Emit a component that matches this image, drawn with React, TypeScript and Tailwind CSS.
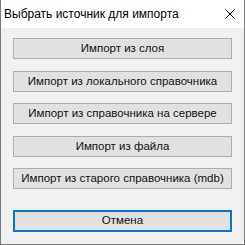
const items = [
  { label: 'Импорт из слоя', mt: 'mt-0' },
  { label: 'Импорт из локального справочника', mt: 'mt-[12px]' },
  { label: 'Импорт из справочника на сервере', mt: 'mt-[11px]' },
  { label: 'Импорт из файла', mt: 'mt-[12px]' },
  { label: 'Импорт из старого справочника (mdb)', mt: 'mt-[11px]' },
];

export default function App() {
  return (
    <div className="w-[245px] h-[245px] flex flex-col bg-[#f0f0f0] border-x border-b border-[#7a7a7a] font-['Liberation_Sans',sans-serif] text-black">
      <div className="h-[28px] bg-white flex items-center justify-between pl-[3px] pr-[8px]">
        <span className="text-[12px] leading-none">Выбрать источник для импорта</span>
        <svg width="10" height="10" viewBox="0 0 10 10" className="mr-[1px]">
          <path d="M0.5 0.5 L9.5 9.5 M9.5 0.5 L0.5 9.5" stroke="#111" strokeWidth="1" fill="none" />
        </svg>
      </div>
      <div className="flex flex-col px-[12px] pt-[10px]">
        {items.map((it) => (
          <button
            key={it.label}
            className={`${it.mt} h-[21px] w-full bg-[#e1e1e1] border border-[#adadad] text-[11.5px] font-normal text-[#111] leading-none flex items-center justify-center`}
          >
            {it.label}
          </button>
        ))}
        <button className="mt-[21px] h-[22px] w-full bg-[#e1e1e1] border-2 border-[#0078d7] text-[11.5px] font-normal text-[#111] leading-none flex items-center justify-center">
          Отмена
        </button>
      </div>
    </div>
  );
}
